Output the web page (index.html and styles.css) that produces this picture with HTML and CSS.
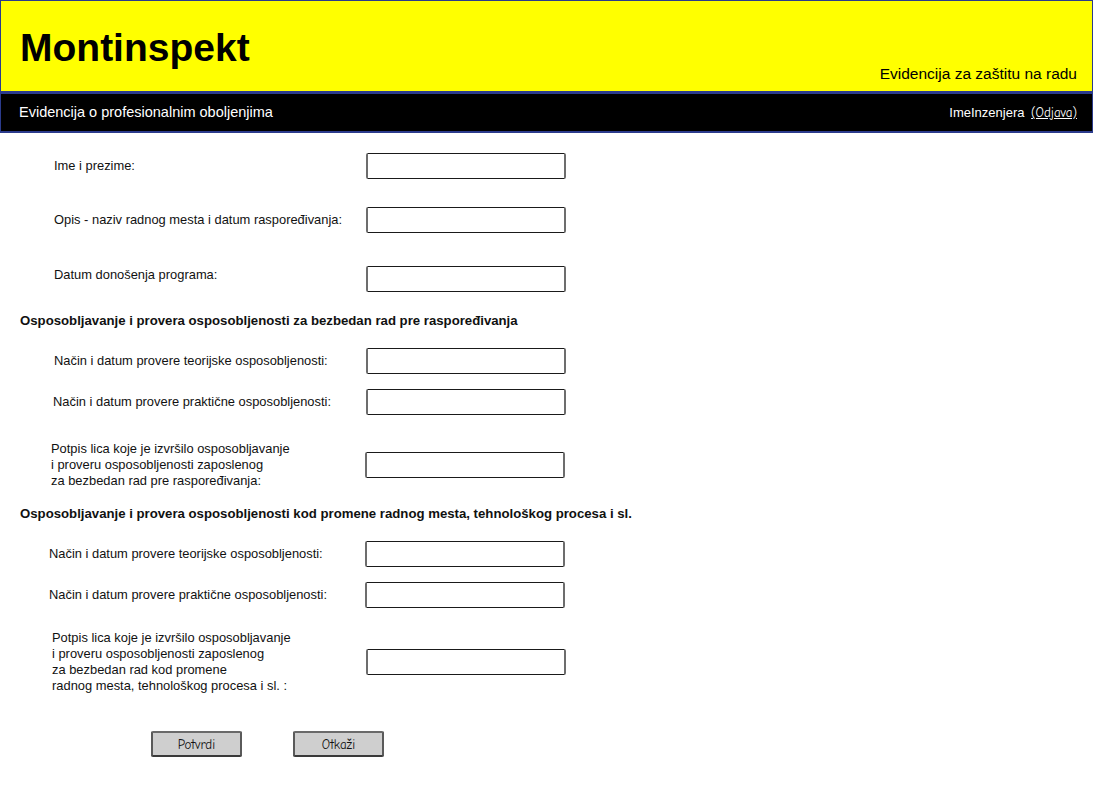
FILE: index.html
```html
<!DOCTYPE html>
<html lang="sr">
<head>
<meta charset="utf-8">
<title>Montinspekt</title>
<link rel="stylesheet" href="styles.css">
</head>
<body>
<header class="masthead">
  <h1 class="brand">Montinspekt</h1>
  <p class="tagline">Evidencija za zaštitu na radu</p>
</header>
<nav class="navbar">
  <span class="nav-title">Evidencija o profesionalnim oboljenjima</span>
  <span class="nav-user">ImeInzenjera <a class="logout" href="#">(Odjava)</a></span>
</nav>
<main class="form">
  <div class="row r1">
    <label class="lbl">Ime i prezime:</label>
    <div class="field"></div>
  </div>
  <div class="row r2">
    <label class="lbl">Opis - naziv radnog mesta i datum raspoređivanja:</label>
    <div class="field"></div>
  </div>
  <div class="row r3">
    <label class="lbl lbl-up">Datum donošenja programa:</label>
    <div class="field"></div>
  </div>

  <h2 class="section s1">Osposobljavanje i provera osposobljenosti za bezbedan rad pre raspoređivanja</h2>

  <div class="row r4">
    <label class="lbl">Način i datum provere teorijske osposobljenosti:</label>
    <div class="field"></div>
  </div>
  <div class="row r5">
    <label class="lbl lbl-b">Način i datum provere praktične osposobljenosti:</label>
    <div class="field"></div>
  </div>
  <div class="row r6">
    <label class="lbl lbl-c">Potpis lica koje je izvršilo osposobljavanje<br>i proveru osposobljenosti zaposlenog<br>za bezbedan rad pre raspoređivanja:</label>
    <div class="field field-l"></div>
  </div>

  <h2 class="section s2">Osposobljavanje i provera osposobljenosti kod promene radnog mesta, tehnološkog procesa i sl.</h2>

  <div class="row r7">
    <label class="lbl lbl-d">Način i datum provere teorijske osposobljenosti:</label>
    <div class="field field-l"></div>
  </div>
  <div class="row r8">
    <label class="lbl lbl-d">Način i datum provere praktične osposobljenosti:</label>
    <div class="field field-l"></div>
  </div>
  <div class="row r9">
    <label class="lbl lbl-e">Potpis lica koje je izvršilo osposobljavanje<br>i proveru osposobljenosti zaposlenog<br>za bezbedan rad kod promene<br>radnog mesta, tehnološkog procesa i sl. :</label>
    <div class="field"></div>
  </div>

  <div class="actions">
    <button class="btn" type="button">Potvrdi</button>
    <button class="btn" type="button">Otkaži</button>
  </div>
</main>
</body>
</html>
```

FILE: styles.css
```css
* { box-sizing: border-box; }

html, body {
  margin: 0;
  padding: 0;
  background: #ffffff;
  font-family: "Liberation Sans", Arial, sans-serif;
  color: #111;
}

.masthead {
  display: flex;
  justify-content: space-between;
  align-items: flex-start;
  height: 94px;
  background: #ffff00;
  border: 1px solid #2b3b8c;
  border-bottom-width: 3px;
  padding: 0 15px 0 19px;
}

.brand {
  margin: 0;
  padding-top: 27px;
  font-size: 39px;
  line-height: 40px;
  font-weight: bold;
  color: #000;
}

.tagline {
  margin: 0;
  align-self: flex-end;
  margin-bottom: 9px;
  font-size: 15.5px;
  line-height: 16px;
  color: #000;
}

.navbar {
  display: flex;
  justify-content: space-between;
  align-items: center;
  height: 39px;
  background: #000;
  border: 1px solid #2b3b8c;
  border-top: 0;
  border-bottom-width: 2px;
  padding: 0 15px 1px 18px;
  color: #fff;
}

.nav-title {
  font-size: 14.5px;
}

.nav-user {
  font-size: 13px;
}

.logout {
  color: #fff;
  margin-left: 3px;
  font-family: "Comic Sans MS", "Comic Neue", cursive;
  text-decoration: underline;
}

.form {
  padding: 0 0 40px 0;
}

.row {
  display: flex;
  align-items: center;
}

.lbl {
  width: 366px;
  padding-left: 54px;
  font-size: 12.9px;
  line-height: 16px;
}

.lbl-up { margin-bottom: 8px; }
.lbl-b { padding-left: 53px; }
.lbl-c { padding-left: 51px; width: 365px; }
.lbl-d { padding-left: 49px; width: 365px; }
.lbl-e { padding-left: 52px; }

.field {
  width: 200px;
  height: 26px;
  background: #fff;
  border-style: solid;
  border-width: 1px 2px;
  border-color: #1a1a1a #6d6d6d;
  border-radius: 2px;
}

.r1 { margin-top: 20px; }
.r2 { margin-top: 28px; }
.r3 { margin-top: 33px; }
.r4 { margin-top: 19px; }
.r5 { margin-top: 15px; }
.r6 { margin-top: 26px; }
.r7 { margin-top: 19px; }
.r8 { margin-top: 15px; }
.r9 { margin-top: 22px; }

.section {
  margin: 0;
  padding-left: 20px;
  font-size: 13.2px;
  line-height: 16px;
  font-weight: bold;
}

.s1 { margin-top: 21px; }
.s2 { margin-top: 17px; }

.actions {
  display: flex;
  gap: 51px;
  margin-top: 37px;
  padding-left: 151px;
}

.btn {
  width: 91px;
  height: 26px;
  padding: 0;
  background: #cfcfcf;
  border: 2px solid #5a5a5a;
  border-top-color: #6a6a6a;
  border-bottom-color: #3a3a3a;
  border-radius: 2px;
  font-family: "Comic Sans MS", "Comic Neue", cursive;
  font-size: 13px;
  color: #111;
}
```
